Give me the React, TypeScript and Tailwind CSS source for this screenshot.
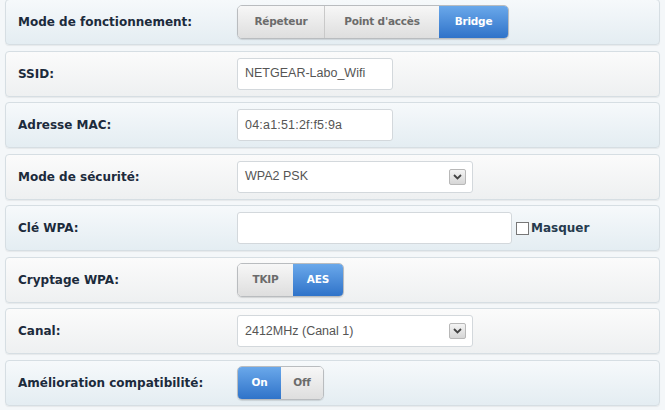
import { ReactNode } from 'react';

const label = "font-['DejaVu_Sans',sans-serif] font-bold text-[12px] text-[#1c2b3c]";
const field = "h-[32px] bg-white border border-[#d3d8dc] rounded-[3px] px-[7px] flex items-center font-['Liberation_Sans',sans-serif] text-[12.5px] text-[#555]";

function Row({ title, tint, children }: { title: string; tint: boolean; children: ReactNode }) {
  return (
    <div
      className={`h-[46px] flex items-center border border-[#d6dee3] rounded-[4px] shadow-[0_1px_1px_rgba(0,0,0,0.06)] ${
        tint ? 'bg-gradient-to-b from-[#f6f9fb] to-[#e4edf2]' : 'bg-gradient-to-b from-[#fbfbfb] to-[#eef0f1]'
      }`}
    >
      <div className={`w-[231px] pl-[12px] ${label}`}>{title}</div>
      <div className="flex items-center">{children}</div>
    </div>
  );
}

function Segmented({ items, active, widths }: { items: string[]; active: number; widths: number[] }) {
  return (
    <div className="flex h-[34px] border border-[#b9bcbf] rounded-[5px] overflow-hidden shadow-[0_1px_1px_rgba(0,0,0,0.12)]">
      {items.map((it, i) => (
        <div
          key={it}
          style={{ width: widths[i] }}
          className={`flex items-center justify-center font-['DejaVu_Sans',sans-serif] font-bold text-[10.5px] tracking-[-0.2px] ${
            i === active
              ? 'bg-gradient-to-b from-[#6aa8ea] to-[#2f73c9] text-white'
              : 'bg-gradient-to-b from-[#f7f7f7] to-[#dedede] text-[#6b6b6b]'
          } ${i > 0 && i !== active && i - 1 !== active ? 'border-l border-[#c9c9c9]' : ''}`}
        >
          {it}
        </div>
      ))}
    </div>
  );
}

function Select({ value }: { value: string }) {
  return (
    <div className={`${field} w-[236px] justify-between pr-[6px]`}>
      <span>{value}</span>
      <span className="w-[17px] h-[16px] border border-[#b8b8b8] rounded-[2px] bg-gradient-to-b from-[#f4f4f4] to-[#d6d6d6] flex items-center justify-center">
        <svg width="9" height="6" viewBox="0 0 9 6">
          <path d="M1 1l3.5 3.5L8 1" fill="none" stroke="#444" strokeWidth="1.8" />
        </svg>
      </span>
    </div>
  );
}

export default function App() {
  return (
    <div className="w-[665px] h-[410px] bg-[#f4f7f9] px-[5px] overflow-hidden">
      <div className="flex flex-col gap-[5.5px] -mt-[1px]">
        <Row title="Mode de fonctionnement:" tint>
          <Segmented items={['Répeteur', "Point d'accès", 'Bridge']} active={2} widths={[86, 115, 69]} />
        </Row>
        <Row title="SSID:" tint={false}>
          <div className={`${field} w-[156px]`}>NETGEAR-Labo_Wifi</div>
        </Row>
        <Row title="Adresse MAC:" tint>
          <div className={`${field} w-[156px] text-[11.5px] tracking-[0.2px]`}>04:a1:51:2f:f5:9a</div>
        </Row>
        <Row title="Mode de sécurité:" tint={false}>
          <Select value="WPA2 PSK" />
        </Row>
        <Row title="Clé WPA:" tint>
          <div className={`${field} w-[275px]`} />
          <span className="ml-[4px] w-[13px] h-[13px] border border-[#777] bg-white" />
          <span className={`${label} ml-[2px] text-[#263a4e]`}>Masquer</span>
        </Row>
        <Row title="Cryptage WPA:" tint={false}>
          <Segmented items={['TKIP', 'AES']} active={1} widths={[55, 50]} />
        </Row>
        <Row title="Canal:" tint={false}>
          <Select value="2412MHz (Canal 1)" />
        </Row>
        <Row title="Amélioration compatibilité:" tint>
          <Segmented items={['On', 'Off']} active={0} widths={[43, 42]} />
        </Row>
      </div>
    </div>
  );
}
